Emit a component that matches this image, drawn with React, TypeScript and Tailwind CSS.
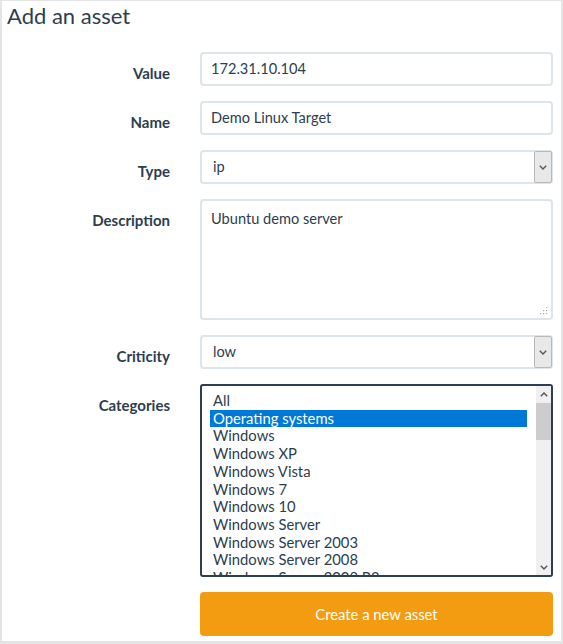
import type { ReactNode } from 'react';

const CATEGORIES = [
  'All',
  'Operating systems',
  'Windows',
  'Windows XP',
  'Windows Vista',
  'Windows 7',
  'Windows 10',
  'Windows Server',
  'Windows Server 2003',
  'Windows Server 2008',
  'Windows Server 2008 R2',
  'Linux',
];

const font = { fontFamily: 'Lato, "Noto Sans", sans-serif' };

function Row({ label, children }: { label: string; children: ReactNode }) {
  return (
    <>
      <label className="pt-[11px] text-right text-[15px] font-bold leading-[20px] text-[#2c3e50]">{label}</label>
      <div>{children}</div>
    </>
  );
}

function Chevron({ up = false }: { up?: boolean }) {
  return (
    <svg width="8" height="5" viewBox="0 0 8 5" className={up ? 'rotate-180' : ''} aria-hidden>
      <path d="M0.8 0.8 L4 4 L7.2 0.8" fill="none" stroke="#555" strokeWidth="1.4" />
    </svg>
  );
}

function FakeSelect({ value }: { value: string }) {
  return (
    <div className="flex h-[34px] items-stretch rounded-[4px] border-2 border-[#dce4ec] bg-white">
      <span className="flex flex-1 items-center pl-[11px] text-[14.6px] text-[#2c3e50]">{value}</span>
      <span className="my-[-1px] mr-[-1px] flex w-[18px] items-center justify-center rounded-[2px] border border-[#b8b8b8] bg-[#e8e8e8]">
        <Chevron />
      </span>
    </div>
  );
}

export default function App() {
  return (
    <div
      className="h-[644px] w-[563px] border-x-2 border-t border-b-[3px] border-[#e4e4e4] bg-white"
      style={font}
    >
      <h2 className="pl-[5px] pt-[1px] text-[22px] leading-[28px] font-normal text-[#2c3e50]">Add an asset</h2>

      <div className="mt-[22px] grid grid-cols-[168px_1fr] gap-x-[30px] gap-y-[15px] pr-[8px]">
        <Row label="Value">
          <div className="flex h-[34px] items-center rounded-[4px] border-2 border-[#dce4ec] px-[9px] text-[14.6px] text-[#2c3e50]">
            172.31.10.104
          </div>
        </Row>
        <Row label="Name">
          <div className="flex h-[34px] items-center rounded-[4px] border-2 border-[#dce4ec] px-[9px] text-[14.6px] text-[#2c3e50]">
            Demo Linux Target
          </div>
        </Row>
        <Row label="Type">
          <FakeSelect value="ip" />
        </Row>
        <Row label="Description">
          <div className="relative h-[121px] rounded-[4px] border-2 border-[#dce4ec] px-[9px] pt-[7px] text-[14.6px] text-[#2c3e50]">
            Ubuntu demo server
            <svg width="8" height="8" viewBox="0 0 8 8" className="absolute bottom-[3px] right-[3px]" aria-hidden>
              <g fill="#a8a8a8">
                <rect x="6" y="0" width="1.2" height="1.2" />
                <rect x="3" y="3" width="1.2" height="1.2" />
                <rect x="6" y="3" width="1.2" height="1.2" />
                <rect x="0" y="6" width="1.2" height="1.2" />
                <rect x="3" y="6" width="1.2" height="1.2" />
                <rect x="6" y="6" width="1.2" height="1.2" />
              </g>
            </svg>
          </div>
        </Row>
        <Row label="Criticity">
          <FakeSelect value="low" />
        </Row>
        <Row label="Categories">
          <div className="flex h-[193px] rounded-[3px] border-2 border-[#2c3e50] bg-white">
            <ul className="flex-1 overflow-hidden pl-[8px] pr-[9px] pt-[6px] text-[14.8px] leading-[17.7px] text-[#2c3e50]">
              {CATEGORIES.map((c, i) => (
                <li key={c} className={`pl-[3px] ${i === 1 ? 'bg-[#0078d7] text-white' : ''}`}>
                  {c}
                </li>
              ))}
            </ul>
            <div className="flex w-[15px] flex-col bg-[#f0f0f0]">
              <div className="flex h-[17px] items-center justify-center">
                <Chevron up />
              </div>
              <div className="h-[37px] bg-[#cdcdcd]" />
              <div className="flex-1" />
              <div className="flex h-[15px] items-center justify-center">
                <Chevron />
              </div>
            </div>
          </div>
        </Row>
        <div />
        <button className="h-[44px] rounded-[4px] bg-[#f39c12] text-[14.8px] text-white">Create a new asset</button>
      </div>
    </div>
  );
}
